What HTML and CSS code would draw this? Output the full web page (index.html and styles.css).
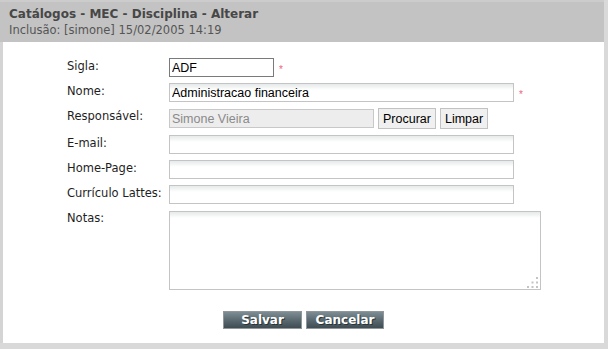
FILE: index.html
```html
<!DOCTYPE html>
<html lang="pt">
<head>
<meta charset="utf-8">
<title>Catálogos - MEC - Disciplina - Alterar</title>
<link rel="stylesheet" href="styles.css">
</head>
<body>
<div class="window">
  <div class="header">
    <div class="title">Catálogos - MEC - Disciplina - Alterar</div>
    <div class="subtitle">Inclusão: [simone] 15/02/2005 14:19</div>
  </div>
  <div class="content">
    <div class="form">
      <label class="lbl">Sigla:</label>
      <div class="field"><input class="inp inp-sigla" type="text" value="ADF"><span class="req">*</span></div>

      <label class="lbl">Nome:</label>
      <div class="field"><input class="inp inp-wide" type="text" value="Administracao financeira"><span class="req">*</span></div>

      <label class="lbl">Responsável:</label>
      <div class="field field-resp"><input class="inp inp-resp" type="text" value="Simone Vieira" disabled><button class="sbtn" type="button">Procurar</button><button class="sbtn" type="button">Limpar</button></div>

      <label class="lbl">E-mail:</label>
      <div class="field"><input class="inp inp-wide" type="text" value=""></div>

      <label class="lbl">Home-Page:</label>
      <div class="field"><input class="inp inp-wide" type="text" value=""></div>

      <label class="lbl">Currículo Lattes:</label>
      <div class="field"><input class="inp inp-wide" type="text" value=""></div>

      <label class="lbl lbl-notas">Notas:</label>
      <div class="field field-notas">
        <div class="ta-wrap">
          <textarea class="ta"></textarea>
          <svg class="grip" width="11" height="11" viewBox="0 0 11 11" aria-hidden="true">
            <rect x="9" y="0" width="2" height="2"/>
            <rect x="4.5" y="4.5" width="2" height="2"/>
            <rect x="9" y="4.5" width="2" height="2"/>
            <rect x="0" y="9" width="2" height="2"/>
            <rect x="4.5" y="9" width="2" height="2"/>
            <rect x="9" y="9" width="2" height="2"/>
          </svg>
        </div>
      </div>
    </div>
    <div class="actions">
      <button class="btn btn-salvar" type="button">Salvar</button>
      <button class="btn btn-cancelar" type="button">Cancelar</button>
    </div>
  </div>
</div>
</body>
</html>
```
FILE: styles.css
```css
html, body {
  margin: 0;
  padding: 0;
}
body {
  width: 608px;
  height: 349px;
  overflow: hidden;
  background: #d9d9d9;
  font-family: "DejaVu Sans", Verdana, sans-serif;
}
.window {
  width: 604px;
  height: 343px;
  background: #ffffff;
  display: flex;
  flex-direction: column;
}
.header {
  box-sizing: border-box;
  height: 42px;
  background: #c3c3c3;
  border-top: 2px solid #cccccc;
  padding: 5px 0 0 9px;
}
.title {
  font-weight: bold;
  font-size: 12px;
  line-height: 15px;
  color: #474747;
}
.subtitle {
  margin-top: 1px;
  font-size: 11.5px;
  line-height: 14px;
  color: #555555;
}
.content {
  flex: 1;
  border-left: 3px solid #d4d4d4;
  padding: 16px 0 0 64px;
}
.form {
  display: grid;
  grid-template-columns: 102px auto;
  row-gap: 6px;
  align-items: start;
}
.lbl {
  font-size: 11.5px;
  line-height: 13px;
  padding-top: 2px;
  color: #1e1e1e;
  white-space: nowrap;
}
.field {
  display: flex;
  align-items: center;
}
.field-notas {
  margin-top: 1px;
}
.inp {
  box-sizing: border-box;
  height: 19px;
  margin: 0;
  padding: 0 2px;
  border: 1px solid #c4c4c4;
  background: linear-gradient(to bottom, #e6eaea 0, #ffffff 6px);
  font-family: "Liberation Sans", Arial, sans-serif;
  font-size: 12.5px;
  color: #000000;
  outline: none;
}
.inp-sigla {
  width: 105px;
  border-color: #7a7a7a;
  background: #ffffff;
}
.inp-wide {
  width: 345px;
}
.inp-resp {
  width: 205px;
  background: #ededed;
  border-color: #c8c8c8;
  color: #8a8a8a;
}
.req {
  margin-left: 5px;
  font-family: "Liberation Sans", Arial, sans-serif;
  font-size: 10px;
  line-height: 10px;
  color: #ee5f7e;
  padding-top: 4px;
}
.sbtn {
  box-sizing: border-box;
  height: 21px;
  margin: 0 0 0 4px;
  padding: 0 4px;
  border: 1px solid #c2c2c2;
  background: #f0f0f0;
  font-family: "Liberation Sans", Arial, sans-serif;
  font-size: 12.5px;
  color: #000000;
}
.ta-wrap {
  position: relative;
  width: 372px;
  height: 79px;
}
.ta {
  box-sizing: border-box;
  display: block;
  width: 100%;
  height: 100%;
  margin: 0;
  padding: 2px;
  border: 1px solid #c4c4c4;
  background: linear-gradient(to bottom, #e6eaea 0, #ffffff 6px);
  resize: none;
  outline: none;
}
.grip {
  position: absolute;
  right: 3px;
  bottom: 2px;
  fill: #c4c4c4;
}
.actions {
  display: flex;
  justify-content: center;
  gap: 4px;
  margin: 21px 0 0 -64px;
}
.btn {
  box-sizing: border-box;
  height: 18px;
  margin: 0;
  padding: 0;
  border: 1px solid #8e989b;
  background: linear-gradient(to bottom, #7d8d93 0, #5a6a70 50%, #3f4d53 100%);
  font-family: "DejaVu Sans", Verdana, sans-serif;
  font-weight: bold;
  font-size: 12px;
  line-height: 16px;
  color: #ffffff;
  text-shadow: 1px 1px 0 #2a3438;
}
.btn-salvar {
  width: 79px;
}
.btn-cancelar {
  width: 78px;
}
```
